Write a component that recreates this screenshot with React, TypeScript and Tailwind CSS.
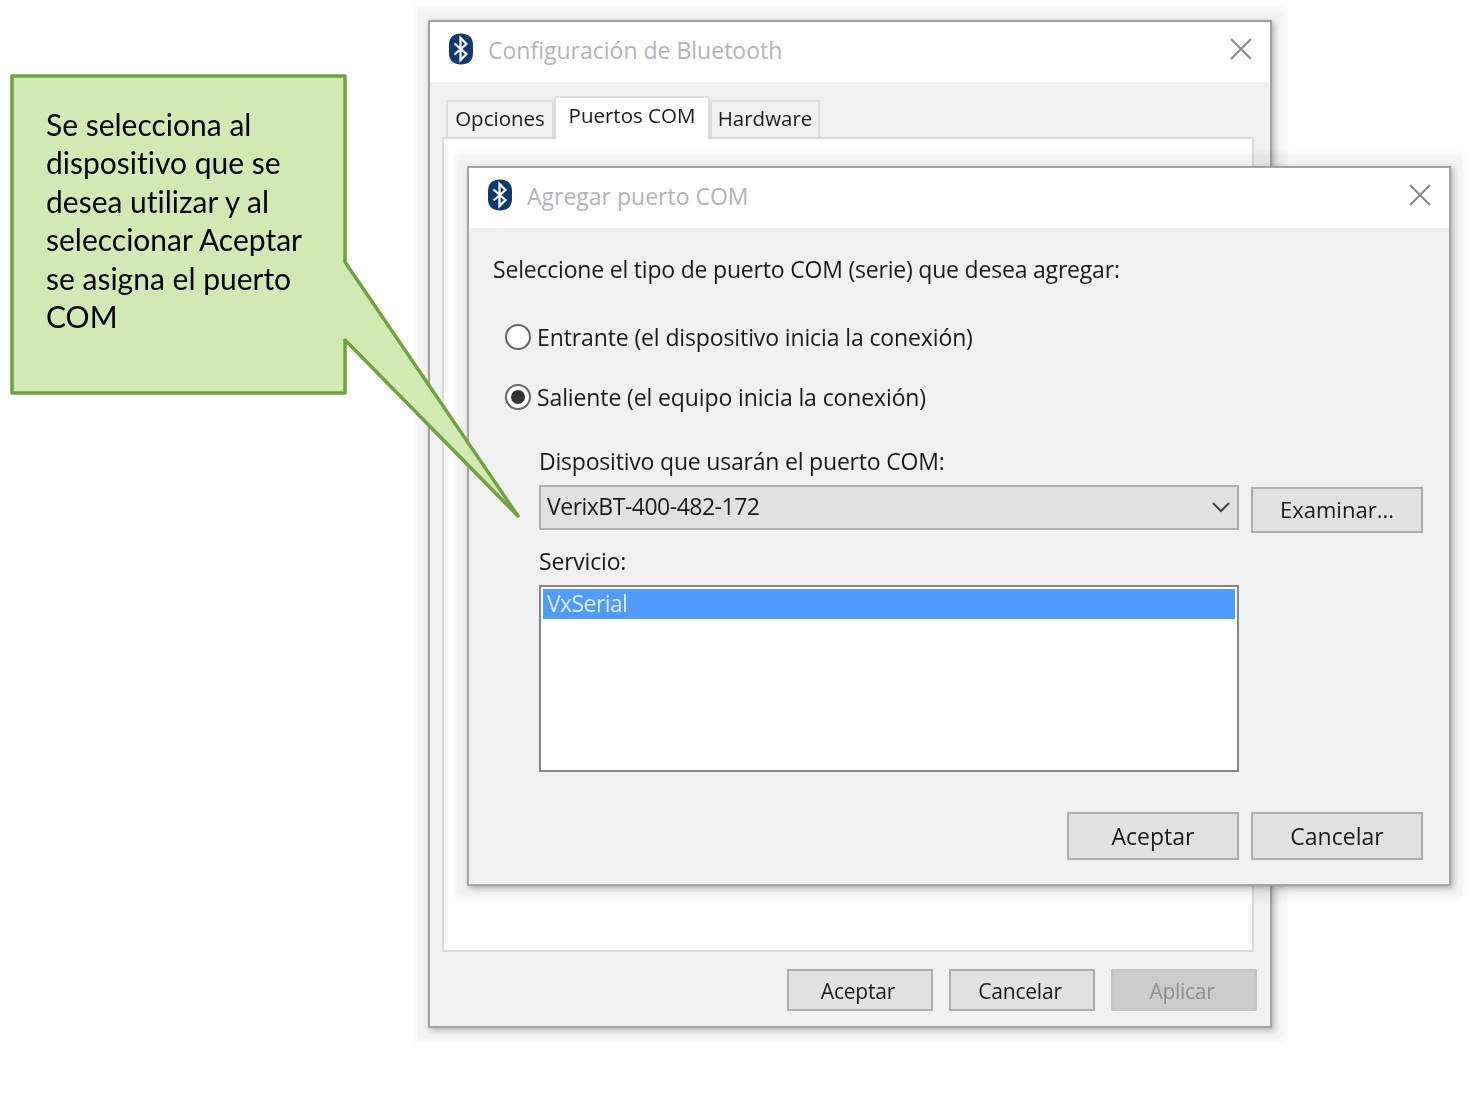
import React from 'react';

const dialogFont = { fontFamily: '"Open Sans", "Noto Sans", sans-serif' };

const BluetoothIcon: React.FC = () => (
  <svg width="26" height="32" viewBox="0 0 26 32" className="-mt-[2px] shrink-0">
    <path d="M13 0.5C20 0.5 25 4 25 12V20C25 28 20 31.5 13 31.5C6 31.5 1 28 1 20V12C1 4 6 0.5 13 0.5Z" fill="#0f3a70" />
    <path d="M6.5 10.5L18.5 21L12.5 27V5L18.5 11L6.5 21.5" fill="none" stroke="#ffffff" strokeWidth="2.2" />
  </svg>
);

const CloseIcon: React.FC = () => (
  <svg width="22" height="22" viewBox="0 0 22 22">
    <path d="M1 1L21 21M21 1L1 21" stroke="#8a8a8a" strokeWidth="2" fill="none" />
  </svg>
);

const TitleBar: React.FC<{ title: string }> = ({ title }) => (
  <div className="flex h-[60px] items-center bg-white pb-[4px] pl-[18px] pr-[18px]">
    <BluetoothIcon />
    <span className="ml-[14px] text-[23px] leading-[30px] text-[#b4b4b8]">{title}</span>
    <span className="-mt-[2px] ml-auto flex">
      <CloseIcon />
    </span>
  </div>
);

const SmallButton: React.FC<{ label: string; disabled?: boolean }> = ({ label, disabled }) => (
  <div
    className={
      disabled
        ? 'flex h-[42px] w-[146px] items-center justify-center border-2 border-[#c4c4c4] bg-[#cccccc] pr-[4px] pt-[3px] text-[21px] tracking-[-0.3px] text-[#8f8f8f]'
        : 'flex h-[42px] w-[146px] items-center justify-center border-2 border-[#adadad] bg-[#e1e1e1] pr-[4px] pt-[3px] text-[21px] tracking-[-0.2px] text-[#1a1a1a]'
    }
  >
    {label}
  </div>
);

const BigButton: React.FC<{ label: string }> = ({ label }) => (
  <div className="flex h-[48px] w-[172px] items-center justify-center border-2 border-[#adadad] bg-[#e1e1e1] text-[23px] text-[#1a1a1a]">
    {label}
  </div>
);

const Radio: React.FC<{ checked?: boolean; label: string }> = ({ checked, label }) => (
  <div className="flex h-[30px] items-center">
    <span className="flex h-[26px] w-[26px] items-center justify-center rounded-full border-2 border-[#666666] bg-white">
      {checked && <span className="h-[14px] w-[14px] rounded-full bg-[#333333]" />}
    </span>
    <span className="ml-[6px] text-[23px] leading-[30px] tracking-[-0.12px] text-[#1a1a1a]">{label}</span>
  </div>
);

export default function App() {
  return (
    <div className="relative h-[1114px] w-[1470px] overflow-hidden bg-white" style={dialogFont}>
      {/* main window */}
      <div className="absolute left-[428px] top-[20px] flex h-[1008px] w-[844px] flex-col border-2 border-[#a3a3a3] bg-[#f0f0f0] shadow-[2px_2px_6px_rgba(0,0,0,0.3),0_0_6px_13px_rgba(0,0,0,0.05)] blur-[0.5px]">
        <TitleBar title="Configuración de Bluetooth" />
        <div className="ml-[16px] mt-[14px] flex h-[41px] items-end text-[20.5px] text-[#1a1a1a]">
          <div className="flex h-[37px] w-[108px] items-center justify-center border-2 border-b-0 border-[#dcdcdc] pb-[2px]">Opciones</div>
          <div className="z-10 -mb-[2px] flex h-[43px] w-[156px] items-center justify-center border-2 border-b-0 border-[#dcdcdc] bg-white pb-[6px]">Puertos COM</div>
          <div className="flex h-[37px] w-[110px] items-center justify-center border-2 border-b-0 border-[#dcdcdc] pb-[2px]">Hardware</div>
        </div>
        <div className="ml-[12px] h-[815px] w-[812px] border-2 border-[#dcdcdc] bg-white" />
        <div className="ml-[357px] mt-[17px] flex gap-4">
          <SmallButton label="Aceptar" />
          <SmallButton label="Cancelar" />
          <SmallButton label="Aplicar" disabled />
        </div>
      </div>

      {/* add COM port dialog */}
      <div className="absolute left-[467px] top-[166px] flex h-[720px] w-[984px] flex-col border-2 border-[#a3a3a3] bg-[#f0f0f0] shadow-[2px_2px_6px_rgba(0,0,0,0.3),0_0_6px_13px_rgba(0,0,0,0.05)] blur-[0.5px]">
        <TitleBar title="Agregar puerto COM" />
        <div className="flex flex-col pl-[24px] pt-[26px]">
          <div className="text-[23px] leading-[30px] tracking-[-0.2px] text-[#1a1a1a]">Seleccione el tipo de puerto COM (serie) que desea agregar:</div>
          <div className="ml-[12px] mt-[38px] flex flex-col gap-[30px]">
            <Radio label="Entrante (el dispositivo inicia la conexión)" />
            <Radio checked label="Saliente (el equipo inicia la conexión)" />
          </div>
          <div className="ml-[46px] mt-[34px] flex flex-col">
            <div className="text-[23px] leading-[30px] tracking-[-0.2px] text-[#1a1a1a]">Dispositivo que usarán el puerto COM:</div>
            <div className="mt-[9px] flex items-start gap-3">
              <div className="flex h-[45px] w-[700px] items-center justify-between border-2 border-[#adadad] bg-[#e1e1e1] pb-[2px] pl-[6px] pr-[6px] text-[23px] tracking-[-0.5px] text-[#1a1a1a]">
                <span>VerixBT-400-482-172</span>
                <svg width="20" height="12" viewBox="0 0 20 12">
                  <path d="M2 2L10 10L18 2" stroke="#444444" strokeWidth="2" fill="none" />
                </svg>
              </div>
              <div className="mt-[2px] flex h-[46px] w-[172px] items-center justify-center border-2 border-[#adadad] bg-[#e1e1e1] pb-[2px] text-[22px] text-[#1a1a1a]">
                Examinar...
              </div>
            </div>
            <div className="mt-[13px] text-[23px] leading-[30px] tracking-[-0.2px] text-[#1a1a1a]">Servicio:</div>
            <div className="mt-[9px] h-[187px] w-[700px] border-2 border-[#82858c] bg-white p-[2px]">
              <div className="flex h-[30px] items-center bg-[#4f9bfb] pb-[2px] pl-[4px] text-[23px] tracking-[-0.6px] text-[#dce9ff]">VxSerial</div>
            </div>
            <div className="mt-[40px] flex gap-3">
              <div className="ml-[528px] flex gap-3">
                <BigButton label="Aceptar" />
                <BigButton label="Cancelar" />
              </div>
            </div>
          </div>
        </div>
      </div>

      {/* callout */}
      <svg className="absolute left-0 top-0" width="540" height="530" viewBox="0 0 540 530">
        <path
          d="M12 76H345V262L518 516L345 340V393H12Z"
          fill="#d3e9b3"
          stroke="#70a33c"
          strokeWidth="3.5"
          strokeLinejoin="round"
        />
      </svg>
      <div
        className="absolute left-[46px] top-[105px] w-[290px] text-[30px] leading-[38.4px] text-black [font-variant-ligatures:none]"
        style={{ fontFamily: 'Lato, "Open Sans", sans-serif' }}
      >
        Se selecciona al dispositivo que se desea utilizar y al seleccionar Aceptar se asigna el puerto COM
      </div>
    </div>
  );
}
